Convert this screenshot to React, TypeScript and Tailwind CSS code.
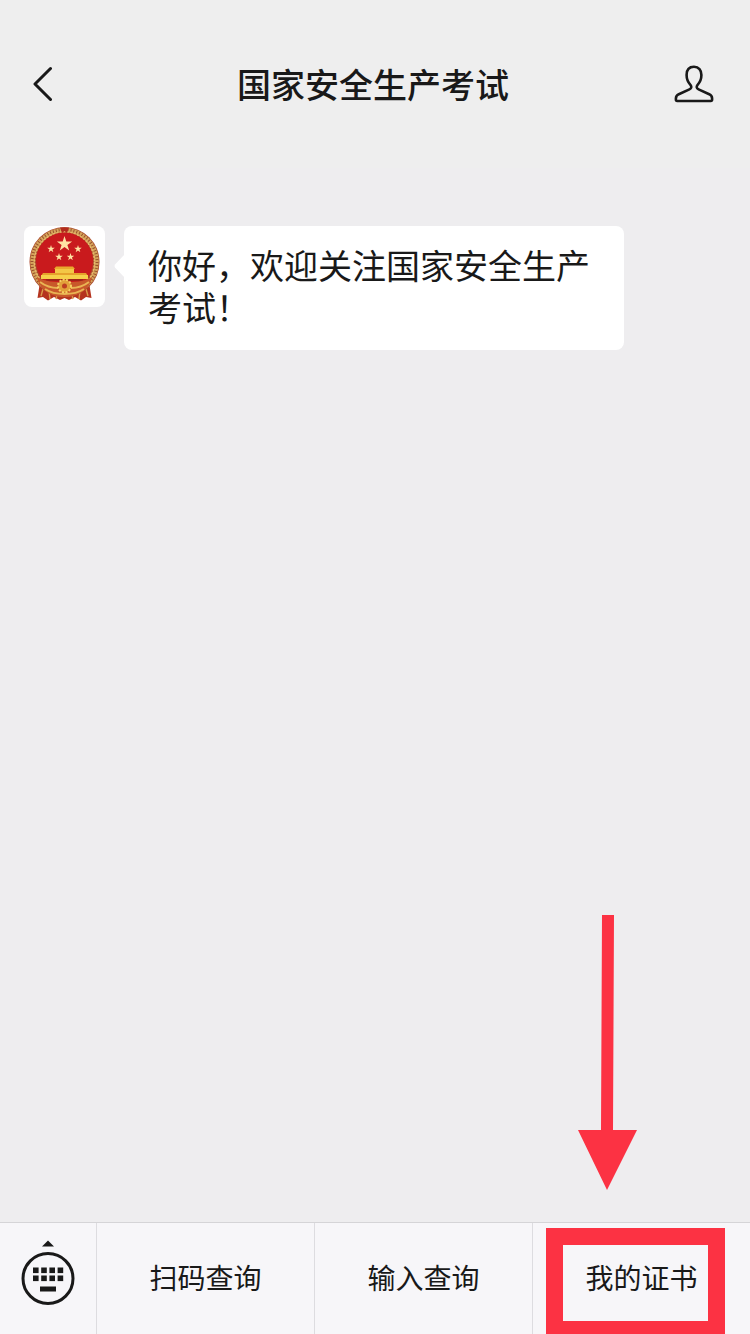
const MENU = ['扫码查询', '输入查询', '我的证书']

const STAR = 'M0 -1L0.225 -0.309L0.951 -0.309L0.363 0.118L0.588 0.809L0 0.382L-0.588 0.809L-0.363 0.118L-0.951 -0.309L-0.225 -0.309Z'

const STARS = [
  { x: 40.5, y: 18, s: 8 },
  { x: 27, y: 23, s: 4 },
  { x: 54, y: 23, s: 4 },
  { x: 35, y: 31, s: 4 },
  { x: 46.5, y: 31, s: 4 },
]

function BackIcon() {
  return (
    <svg width="20" height="36" viewBox="0 0 20 36" fill="none" stroke="currentColor" strokeWidth="3" strokeLinecap="round" strokeLinejoin="round">
      <path d="M18.500 2.500L3 18L18.500 33.500" />
    </svg>
  )
}

function ProfileIcon() {
  return (
    <svg width="40" height="38" viewBox="0 0 40 38" fill="none" stroke="currentColor" strokeWidth="2.6" strokeLinejoin="round">
      <path d="M20 1.8C15.200 1.8 12.600 5 12.600 10C12.600 14 13.800 17 16.400 19.800C18 21.900 17.400 23.500 15.400 24.400L4.800 29.200C2.800 30.200 1.900 31.400 1.900 33.400V34.600C1.900 35.500 2.300 36 3.200 36H36.800C37.700 36 38.100 35.500 38.100 34.600V33.400C38.100 31.400 37.200 30.200 35.200 29.200L24.600 24.400C22.600 23.500 22 21.900 23.600 19.800C26.200 17 27.400 14 27.400 10C27.400 5 24.800 1.8 20 1.8Z" />
    </svg>
  )
}

function KeyboardIcon() {
  return (
    <svg width="54" height="66" viewBox="0 0 54 66" fill="currentColor">
      <path d="M27 0.5L33 6.5H21Z" />
      <circle cx="27" cy="38.5" r="25" fill="none" stroke="currentColor" strokeWidth="3" />
      {[27.5, 35.5].map(y =>
        [12, 20.2, 28.4, 36.6].map(x => <rect key={`${x}-${y}`} x={x} y={y} width="5.600" height="5.600" />)
      )}
      <rect x="19" y="46.5" width="16" height="5" />
    </svg>
  )
}

function Emblem() {
  return (
    <svg className="size-full" viewBox="0 0 81 81">
      {/* ribbon */}
      <path d="M16 56L13.500 72L19 71L24 74.500L30 71L36 74L40.500 72L45 74L51 71L57 74.500L62 71L67.500 72L65 56Z" fill="#b5341f" />
      <path d="M19 63L17 70M25 65L26 73M56 65L55 73M62 63L64 70M33 69L32 73M48 69L49 73" stroke="#d99a4a" strokeWidth="1.4" />
      {/* wheat ring */}
      <circle cx="40.5" cy="36" r="35" fill="#a9452a" />
      <circle cx="40.5" cy="36" r="32" fill="none" stroke="#d6a55c" strokeWidth="4.5" />
      <circle cx="40.5" cy="36" r="32.5" fill="none" stroke="#98512c" strokeWidth="3" strokeDasharray="1 2" />
      <circle cx="40.5" cy="36" r="30" fill="none" stroke="#e5bb6b" strokeWidth="1.5" strokeDasharray="2 1.5" />
      <path d="M36 1.500H45L43 7L40.500 5L38 7Z" fill="#b32a1d" />
      <circle cx="40.5" cy="35" r="28.5" fill="#c91a1d" />
      {STARS.map(({ x, y, s }) => (
        <path key={x} d={STAR} transform={`translate(${x} ${y}) scale(${s})`} fill="#ffe3a3" />
      ))}
      {/* gate */}
      <path d="M30 43L32 40.500H49L51 43Z" fill="#e9a92d" />
      <rect x="31" y="43" width="19" height="4" fill="#f3c746" />
      <path d="M17 50L19 47H62L64 50Z" fill="#e5a22b" />
      <rect x="17" y="49" width="47" height="4" fill="#f6d04a" />
      <path d="M22 53H59V55H22Z" fill="#9f2419" />
      {/* gear and wheat stalks */}
      <path d="M13 51C22 56 30 56 40.500 56C51 56 59 56 68 51C66 63 55 71 40.500 71C26 71 15 63 13 51Z" fill="#c8582a" />
      <path d="M16 56C24 62 30 62 34 62M65 56C57 62 51 62 47 62M21 63C27 67 33 68 40.500 68C48 68 54 67 60 63" fill="none" stroke="#e9b453" strokeWidth="2" />
      <circle cx="40.5" cy="60" r="6.5" fill="#e2a13a" />
      <circle cx="40.5" cy="60" r="6.5" fill="none" stroke="#f5cf62" strokeWidth="2" strokeDasharray="2 1.5" />
      <circle cx="40.5" cy="60" r="2.5" fill="#bd3f22" />
    </svg>
  )
}

function Arrow() {
  return (
    <svg className="absolute bottom-36 left-11 pointer-events-none" width="60" height="275" viewBox="0 0 60 275" fill="#fc3243">
      <path d="M25 0H37L36 215H60L30 275L1 215H24Z" />
    </svg>
  )
}

export default function App() {
  return (
    <div className="flex min-h-screen flex-col bg-[#eeedef] font-['Noto_Sans_CJK_SC',sans-serif] text-[#191919]">
      <header className="flex h-42 items-center justify-between bg-[#eeeeee] pr-9 pl-8">
        <button aria-label="返回" className="w-12"><BackIcon /></button>
        <h1 className="text-[34px] leading-12 font-medium">国家安全生产考试</h1>
        <button aria-label="公众号资料" className="flex w-12 justify-end"><ProfileIcon /></button>
      </header>

      <main className="flex-1 px-6 pt-[58px]">
        <div className="flex items-start gap-[19px]">
          <div className="size-[81px] shrink-0 overflow-hidden rounded-lg bg-white">
            <Emblem />
          </div>
          <div className="relative max-w-[500px] rounded-lg bg-white px-6 pt-[18px] pb-[22px]">
            <svg className="absolute top-7 -left-2.5" width="11" height="24" viewBox="0 0 11 24" fill="#fff">
              <path d="M11 0L1 10.500Q0 12 1 13.500L11 24Z" />
            </svg>
            <p className="text-[34px] leading-[42px]">你好，欢迎关注国家安全生产考试！</p>
          </div>
        </div>
      </main>

      <footer className="flex h-28 border-t border-[#d5d4d7] bg-[#f7f6f9]">
        <button aria-label="键盘" className="flex w-24 shrink-0 items-center justify-center pb-3">
          <KeyboardIcon />
        </button>
        <nav className="grid flex-1 grid-cols-3">
          {MENU.map((label, i) => (
            <div key={label} className="relative border-l border-[#dddce0]">
              <button className="size-full pb-1 text-[28px]">{label}</button>
              {i === MENU.length - 1 && (
                <>
                  <span className="pointer-events-none absolute top-[5px] right-[25px] bottom-0 left-[13px] border-[17px] border-b-[13px] border-[#fc3243]" />
                  <Arrow />
                </>
              )}
            </div>
          ))}
        </nav>
      </footer>
    </div>
  )
}
